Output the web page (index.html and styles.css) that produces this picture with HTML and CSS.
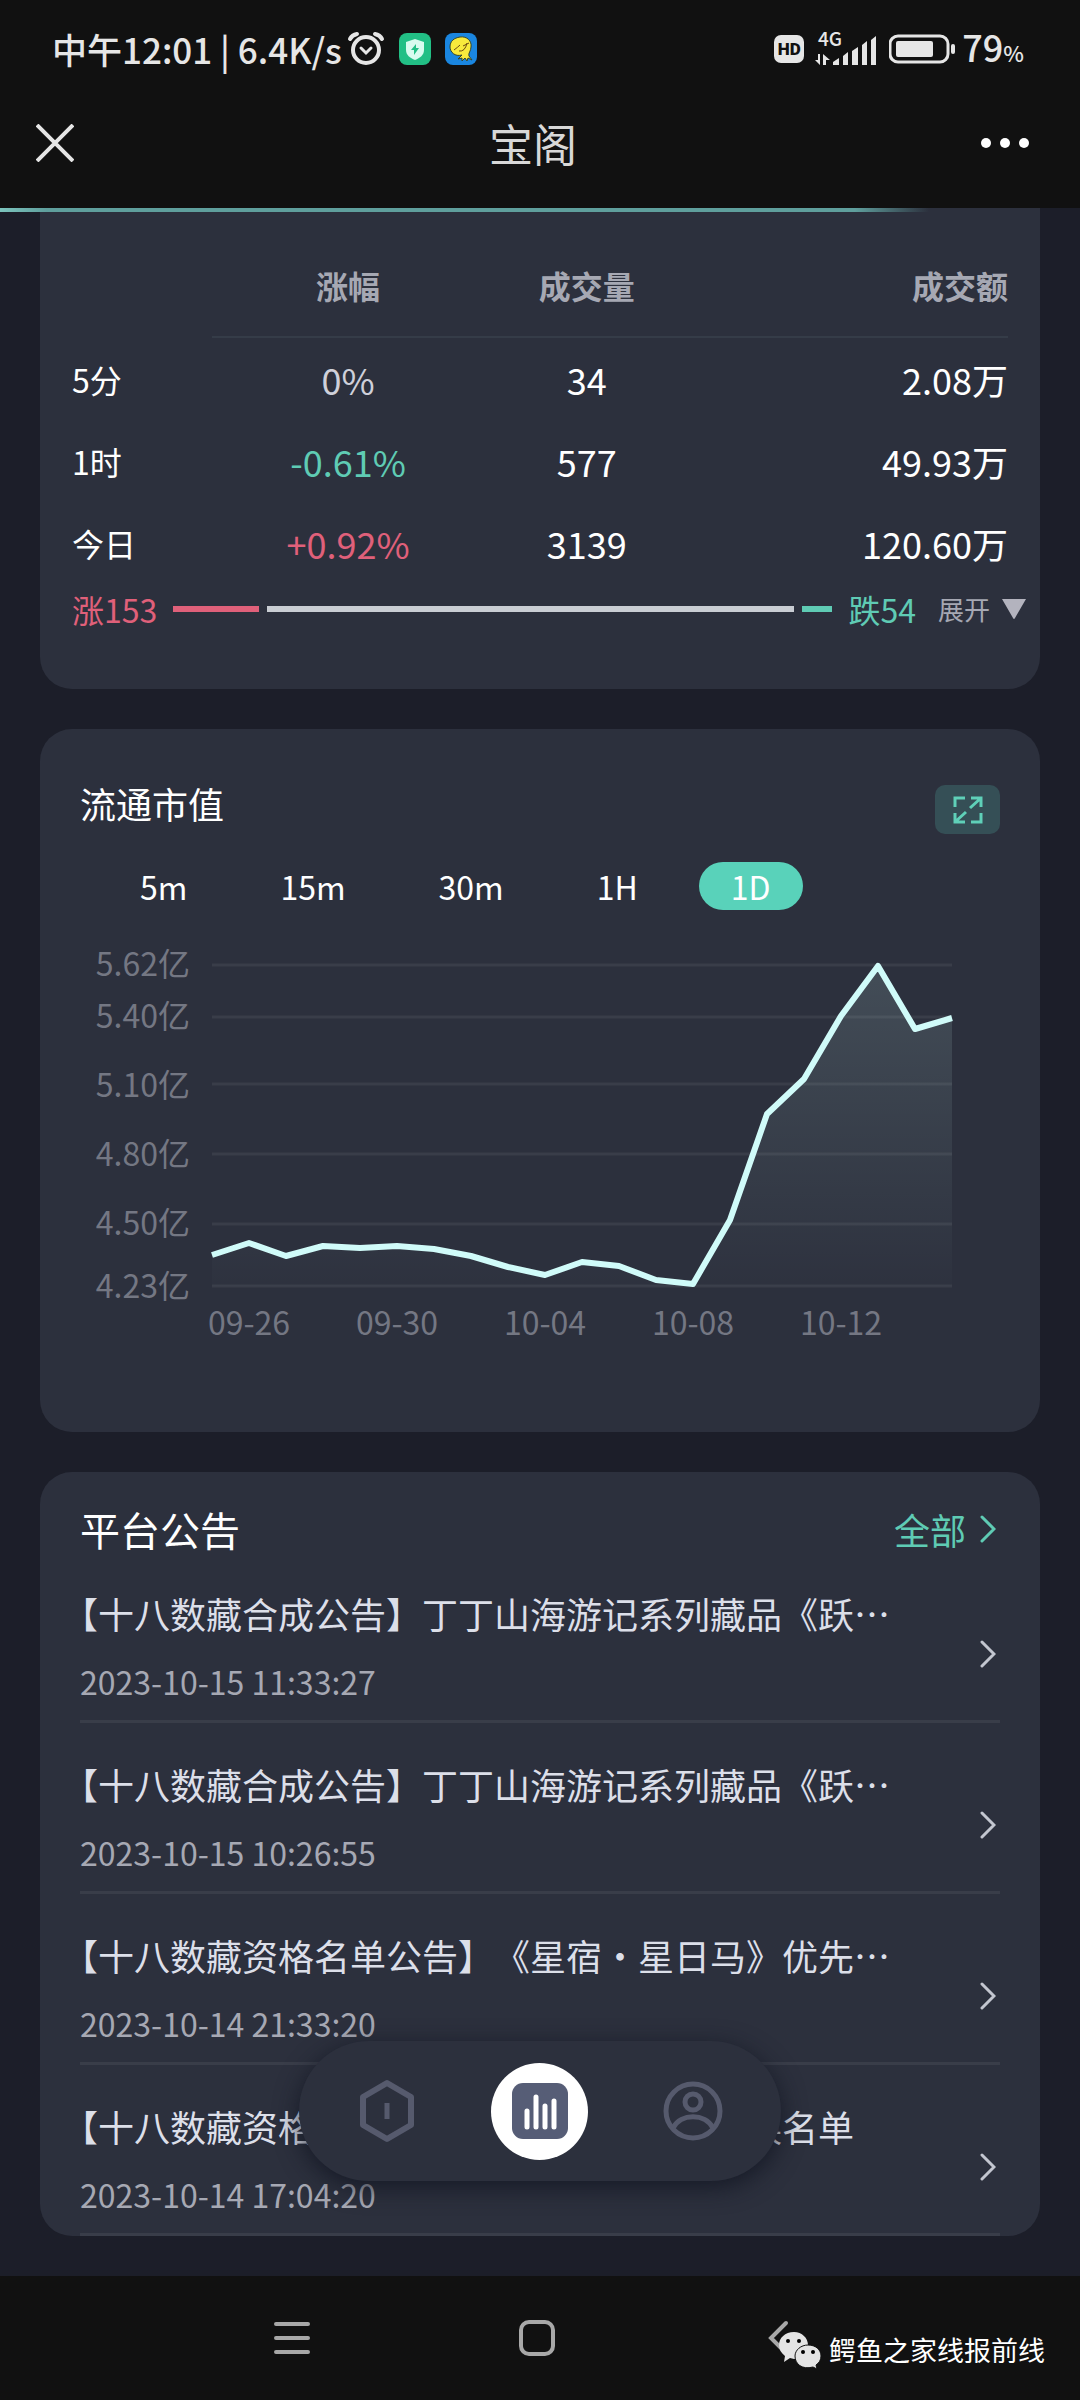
FILE: index.html
```html
<!DOCTYPE html>
<html lang="zh-CN">
<head>
  <meta charset="UTF-8" />
  <meta name="viewport" content="width=device-width, initial-scale=1.0" />
  <title>宝阁</title>
  <link rel="stylesheet" href="styles.css">
</head>
<body>
  <header class="topbar">
    <div class="status">
      <div class="status-side">
        <span class="clock">中午12:01 | 6.4K/s</span>
        <svg class="alarm" width="38" height="36" viewBox="0 0 38 36" fill="none" stroke="#e6e6e6" stroke-linecap="round">
          <circle cx="19" cy="19" r="13" stroke-width="4" />
          <path d="M3 8 Q5 4 10 3 M35 8 Q33 4 28 3" stroke-width="4" />
          <path d="M14 17 L19 22 L24 17" stroke-width="3" />
        </svg>
        <svg class="app-icon" width="32" height="32" viewBox="0 0 32 32">
          <rect width="32" height="32" rx="8" fill="#22bf85" />
          <path d="M16 6 L25 9 V17 C25 22 21 25 16 27 C11 25 7 22 7 17 V9 Z" fill="#d9fbef" />
          <path d="M17 11 L12 17 H15 V22 L20 15 H17 Z" fill="#22bf85" />
        </svg>
        <svg class="app-icon" width="32" height="32" viewBox="0 0 32 32">
          <rect width="32" height="32" rx="8" fill="#1a86e0" />
          <path d="M15 4 C22 3 27 8 26 14 C26 18 23 20 24 23 L27 27 L23 25 L22 28 L20 25 L17 28 L17 25 L13 26 L17 22 C10 24 5 19 5 14 C5 8 9 5 15 4 Z" fill="#f8ea3c" stroke="#35452c" stroke-width="1" />
          <path d="M9 17 Q13 14 15 12 M14 18 Q20 19 22 10 M18 13 L24 10" fill="none" stroke="#6b4a12" stroke-width="1" />
        </svg>
      </div>
      <div class="status-side">
        <span class="hd">HD</span>
        <svg class="signal" width="64" height="52" viewBox="0 -8 64 52" fill="#e6e6e6">
          <text x="3" y="15" class="signal-label">4G</text>
          <path d="M5 23 V34 L0 29 H3 V23 Z M8 34 V23 L15 29 H11 V34 Z" />
          <path d="M18 31 L24 27 V34 H18 Z M28 25 L33 21 V34 H28 Z M37 20 L43 16 V34 H37 Z M47 14 L52 10 V34 H47 Z M56 9 L61 5 V34 H56 Z" />
        </svg>
        <svg class="battery" width="67" height="30" viewBox="0 0 67 30">
          <rect x="1" y="2" width="58" height="26" rx="8" fill="none" stroke="#e6e6e6" stroke-width="3" />
          <rect x="7" y="7" width="37" height="16" rx="2" fill="#e6e6e6" />
          <rect x="62" y="10" width="4" height="10" rx="2" fill="#e6e6e6" />
        </svg>
        <span class="percent">79<small>%</small></span>
      </div>
    </div>
    <div class="titlebar">
      <button class="icon-btn" type="button" aria-label="关闭">
        <svg width="38" height="38" viewBox="0 0 38 38" stroke="#e6e6e6" stroke-width="4"><path d="M1 1 L37 37 M37 1 L1 37" /></svg>
      </button>
      <h1>宝阁</h1>
      <button class="icon-btn" type="button" aria-label="更多">
        <svg width="50" height="12" viewBox="0 0 50 12" fill="#fff"><circle cx="6" cy="6" r="5" /><circle cx="25" cy="6" r="5" /><circle cx="44" cy="6" r="5" /></svg>
      </button>
    </div>
    <div class="progress"></div>
  </header>

  <main>
    <section class="card card-quotes">
      <table class="quotes">
        <thead>
          <tr><td></td><th scope="col">涨幅</th><th scope="col">成交量</th><th scope="col">成交额</th></tr>
        </thead>
        <tbody>
          <tr><th scope="row">5分</th><td class="flat">0%</td><td>34</td><td>2.08万</td></tr>
          <tr><th scope="row">1时</th><td class="down">-0.61%</td><td>577</td><td>49.93万</td></tr>
          <tr><th scope="row">今日</th><td class="up">+0.92%</td><td>3139</td><td>120.60万</td></tr>
        </tbody>
      </table>
      <div class="breadth">
        <span class="up">涨153</span>
        <div class="breadth-bar">
          <i class="bar-up"></i>
          <i class="bar-flat"></i>
          <i class="bar-down"></i>
        </div>
        <span class="down">跌54</span>
        <button class="expand" type="button">展开
          <svg width="24" height="22" viewBox="0 0 24 22" fill="#b3b3be"><path d="M0 1 H24 L13 20 Q12 22 11 20 Z" /></svg>
        </button>
      </div>
    </section>

    <section class="card card-chart">
      <div class="chart-head">
        <h2>流通市值</h2>
        <button class="fullscreen" type="button" aria-label="全屏">
          <svg width="30" height="28" viewBox="0 0 30 28" fill="none" stroke="#5fd0b8" stroke-width="3">
            <path d="M2 11 V2 H12 M18 2 H28 V11 M28 2 L17 12 M28 17 V26 H18 M12 26 H2 V17 M2 26 L13 16" />
          </svg>
        </button>
      </div>
      <div class="tabs">
        <button type="button">5m</button>
        <button type="button">15m</button>
        <button type="button">30m</button>
        <button type="button">1H</button>
        <button type="button" class="active">1D</button>
      </div>
      <svg class="chart" viewBox="0 0 920 482">
        <defs>
          <linearGradient id="area" x1="0" y1="0" x2="0" y2="1">
            <stop offset="0%" stop-color="#d0fff8" stop-opacity="0.14" />
            <stop offset="100%" stop-color="#d0fff8" stop-opacity="0.01" />
          </linearGradient>
        </defs>
        <path class="grid" d="M132 55 H872 M132 107 H872 M132 174 H872 M132 244 H872 M132 314 H872 M132 376 H872" />
        <g class="axis axis-y">
          <text x="110" y="66">5.62亿</text>
          <text x="110" y="118">5.40亿</text>
          <text x="110" y="187">5.10亿</text>
          <text x="110" y="256">4.80亿</text>
          <text x="110" y="325">4.50亿</text>
          <text x="110" y="388">4.23亿</text>
        </g>
        <g class="axis axis-x">
          <text x="169" y="425">09-26</text>
          <text x="317" y="425">09-30</text>
          <text x="465" y="425">10-04</text>
          <text x="613" y="425">10-08</text>
          <text x="761" y="425">10-12</text>
        </g>
        <path fill="url(#area)" d="M132 345 L169 333 L206 346 L243 336 L280 338 L317 336 L354 339 L391 346 L428 357 L465 365 L502 352 L539 356 L576 370 L613 374 L650 310 L687 204 L724 169 L761 106 L798 56 L835 119 L872 108 V376 H132 Z" />
        <path class="line" d="M132 345 L169 333 L206 346 L243 336 L280 338 L317 336 L354 339 L391 346 L428 357 L465 365 L502 352 L539 356 L576 370 L613 374 L650 310 L687 204 L724 169 L761 106 L798 56 L835 119 L872 108" />
      </svg>
    </section>

    <section class="card card-news">
      <div class="news-head">
        <h2>平台公告</h2>
        <a href="#all">全部
          <svg class="chevron" width="16" height="28" viewBox="0 0 16 28"><path d="M2 2 L14 14 L2 26" /></svg>
        </a>
      </div>
      <a class="news" href="#n1">
        <div>
          <h3>【十八数藏合成公告】丁丁山海游记系列藏品《跃…</h3>
          <time>2023-10-15 11:33:27</time>
        </div>
        <svg class="chevron" width="16" height="28" viewBox="0 0 16 28"><path d="M2 2 L14 14 L2 26" /></svg>
      </a>
      <a class="news" href="#n2">
        <div>
          <h3>【十八数藏合成公告】丁丁山海游记系列藏品《跃…</h3>
          <time>2023-10-15 10:26:55</time>
        </div>
        <svg class="chevron" width="16" height="28" viewBox="0 0 16 28"><path d="M2 2 L14 14 L2 26" /></svg>
      </a>
      <a class="news" href="#n3">
        <div>
          <h3>【十八数藏资格名单公告】《星宿・星日马》优先…</h3>
          <time>2023-10-14 21:33:20</time>
        </div>
        <svg class="chevron" width="16" height="28" viewBox="0 0 16 28"><path d="M2 2 L14 14 L2 26" /></svg>
      </a>
      <a class="news" href="#n4">
        <div>
          <h3>【十八数藏资格名单公告】《山海游记》置换名单</h3>
          <time>2023-10-14 17:04:20</time>
        </div>
        <svg class="chevron" width="16" height="28" viewBox="0 0 16 28"><path d="M2 2 L14 14 L2 26" /></svg>
      </a>
    </section>
  </main>

  <nav class="dock">
    <a href="#home" aria-label="首页">
      <svg width="56" height="64" viewBox="0 0 56 64" fill="none" stroke="#565a6d" stroke-width="6" stroke-linejoin="round">
        <path d="M28 4 L52 18 V46 L28 60 L4 46 V18 Z" />
        <path d="M28 24 V40" stroke-width="5" />
      </svg>
    </a>
    <a class="current" href="#market" aria-label="行情">
      <svg width="56" height="56" viewBox="0 0 56 56">
        <rect width="56" height="56" rx="11" fill="#565d76" />
        <path d="M15 28 V44 M24 14 V44 M33 23 V44 M42 18 V44" stroke="#fff" stroke-width="5" stroke-linecap="round" />
      </svg>
    </a>
    <a href="#me" aria-label="我的">
      <svg width="60" height="60" viewBox="0 0 60 60" fill="none" stroke="#565a6d" stroke-width="5">
        <circle cx="30" cy="30" r="27" />
        <circle cx="30" cy="21" r="8" />
        <path d="M10 47 C18 32 42 32 50 47" />
      </svg>
    </a>
  </nav>

  <footer class="sysnav">
    <button class="icon-btn" type="button" aria-label="最近任务">
      <svg width="36" height="36" viewBox="0 0 36 36" stroke="#a8a8a8" stroke-width="4" stroke-linecap="round"><path d="M2 4 H34 M2 18 H34 M2 32 H34" /></svg>
    </button>
    <button class="icon-btn" type="button" aria-label="主页">
      <svg width="36" height="36" viewBox="0 0 36 36" fill="none" stroke="#a8a8a8" stroke-width="4"><rect x="2" y="2" width="32" height="32" rx="8" /></svg>
    </button>
    <button class="icon-btn" type="button" aria-label="返回">
      <svg width="36" height="36" viewBox="0 0 36 36" fill="none" stroke="#a8a8a8" stroke-width="4" stroke-linecap="round"><path d="M23 3 L8 18 L23 33" /></svg>
    </button>
    <div class="watermark">
      <svg width="42" height="38" viewBox="0 0 42 38">
        <path d="M15 1 C23 1 29 7 29 14 C29 22 23 28 15 28 L11 27 L5 31 L6 25 C2 22 0 18 0 14 C0 7 6 1 15 1 Z" fill="#e4e4e4" />
        <path d="M29 14 C37 14 42 19 42 25 C42 29 40 32 37 34 L38 38 L34 36 C23 39 16 33 16 25 C16 19 22 14 29 14 Z" fill="#e4e4e4" stroke="#111" stroke-width="1" />
        <circle cx="9" cy="10" r="2" /><circle cx="20" cy="10" r="2" /><circle cx="24" cy="21" r="2" /><circle cx="34" cy="21" r="2" />
      </svg>
      <span>鳄鱼之家线报前线</span>
    </div>
  </footer>
</body>
</html>
```
FILE: styles.css
```css
:root {
  --bg: #1c1e29;
  --card: #2c303d;
  --bar: #111111;
  --line: #393d49;
  --white: #ffffff;
  --muted: #a6a8b3;
  --axis: #747783;
  --green: #5fcbb4;
  --red: #e0607a;
}

* {
  box-sizing: border-box;
}

body {
  margin: 0;
  min-height: 100vh;
  display: flex;
  flex-direction: column;
  background: var(--bg);
  color: var(--white);
  font-family: "Noto Sans CJK SC", "Noto Sans", sans-serif;
  font-size: 32px;
  line-height: 48px;
}

h1, h2, h3 {
  margin: 0;
  font-weight: 400;
}

a {
  color: inherit;
  text-decoration: none;
}

button {
  border: 0;
  padding: 0;
  background: none;
  color: inherit;
  font: inherit;
}

svg {
  display: block;
  flex: none;
}

.icon-btn {
  display: flex;
}

.up { color: var(--red); }
.down { color: var(--green); }
.flat { color: #cfd0da; }

/* top bar */
.topbar {
  position: relative;
  background: var(--bar);
}

.status {
  height: 80px;
  padding: 18px 56px 0 52px;
  display: flex;
  justify-content: space-between;
  align-items: center;
  color: #e6e6e6;
}

.status-side {
  display: flex;
  align-items: center;
}

.clock {
  font-size: 35px;
  font-weight: 500;
}

.alarm { margin-left: 5px; }
.app-icon { margin-left: 14px; }

.hd {
  width: 30px;
  height: 28px;
  border-radius: 7px;
  background: #e6e6e6;
  color: var(--bar);
  font-family: Roboto, sans-serif;
  font-size: 17px;
  font-weight: 900;
  line-height: 28px;
  text-align: center;
}

.signal { margin-left: 11px; }

.signal-label {
  font-size: 19px;
  font-weight: 500;
}

.battery { margin-left: 10px; }

.percent {
  margin-left: 6px;
  font-size: 36px;
  font-weight: 500;
}

.percent small {
  font-size: 22px;
}

.titlebar {
  height: 128px;
  padding: 0 50px 2px 36px;
  display: grid;
  grid-template-columns: 1fr auto 1fr;
  align-items: center;
}

.titlebar h1 {
  color: #d8d8d8;
  font-size: 44px;
  line-height: 44px;
}

.titlebar .icon-btn:last-child {
  justify-self: end;
}

.progress {
  position: absolute;
  left: 0;
  bottom: -4px;
  width: 86%;
  height: 4px;
  background: linear-gradient(90deg, #7cc4bd, #5f9f9d 5%, #5f9f9d 92%, transparent);
}

/* cards */
main {
  flex: 1;
  padding: 0 40px 40px;
  display: flex;
  flex-direction: column;
  gap: 40px;
}

.card {
  border-radius: 32px;
  background: var(--card);
}

.card-quotes {
  padding: 32px 14px 55px 32px;
  border-radius: 0 0 32px 32px;
}

.quotes {
  width: calc(100% - 18px);
  table-layout: fixed;
  border-collapse: separate;
  border-spacing: 0;
  font-size: 36px;
  text-align: center;
}

.quotes td, .quotes th {
  height: 82px;
  padding: 0;
}

.quotes td:nth-child(1) { width: 15%; }
.quotes th:nth-child(2) { width: 29%; }
.quotes th:nth-child(3) { width: 22%; }

.quotes thead th {
  height: 98px;
  padding-bottom: 6px;
  border-bottom: 2px solid #353c48;
  color: var(--muted);
  font-size: 32px;
  font-weight: 700;
}

.quotes tbody th {
  font-size: 32px;
  font-weight: 400;
  text-align: left;
}

.quotes tr > :last-child {
  text-align: right;
}

.breadth {
  height: 50px;
  display: flex;
  align-items: center;
}

.breadth-bar {
  flex: 1;
  margin: 0 16px;
  display: flex;
  gap: 8px;
}

.breadth-bar i {
  height: 6px;
}

.bar-up { flex: 85; background: var(--red); }
.bar-flat { flex: 526; background: #c9cdd3; }
.bar-down { flex: 30; background: var(--green); }

.expand {
  margin-left: 22px;
  display: flex;
  align-items: center;
  gap: 12px;
  color: var(--muted);
  font-size: 26px;
}

.card-chart {
  padding: 56px 40px 40px;
}

.chart-head {
  display: flex;
  justify-content: space-between;
}

.chart-head h2 {
  font-size: 36px;
  line-height: 36px;
}

.fullscreen {
  width: 65px;
  height: 49px;
  display: flex;
  justify-content: center;
  align-items: center;
  border-radius: 10px;
  background: #354f56;
}

.tabs {
  margin-top: 28px;
  padding-left: 28px;
  display: flex;
  gap: 29px;
}

.tabs button {
  padding: 0 32px;
  border-radius: 24px;
}

.tabs .active {
  background: #59d2ba;
}

.chart {
  width: 100%;
}

.grid {
  stroke: var(--line);
  stroke-width: 3;
}

.axis {
  fill: var(--axis);
  font-size: 32px;
}

.axis-y { text-anchor: end; }
.axis-x { text-anchor: middle; }

.line {
  fill: none;
  stroke: #d0fbf9;
  stroke-width: 6;
  stroke-linejoin: round;
}

/* announcements */
.card-news {
  padding: 34px 40px 0;
}

.news-head {
  height: 46px;
  display: flex;
  justify-content: space-between;
  align-items: center;
}

.news-head h2 {
  font-size: 40px;
}

.news-head a {
  padding-right: 4px;
  display: flex;
  align-items: center;
  gap: 14px;
  color: var(--green);
  font-size: 36px;
}

.chevron {
  fill: none;
  stroke: currentColor;
  stroke-width: 3;
  stroke-linecap: round;
}

.news {
  padding: 37px 4px 19px 0;
  display: flex;
  justify-content: space-between;
  align-items: center;
  border-bottom: 3px solid var(--line);
  color: #dcdfe9;
}

.news h3 {
  font-size: 36px;
  text-indent: -18px;
  text-spacing-trim: space-all;
  white-space: nowrap;
}

.news time {
  display: block;
  margin-top: 24px;
  color: var(--muted);
  line-height: 40px;
}

.news .chevron {
  margin-top: 18px;
  color: #c3c6d0;
}

/* floating menu */
.dock {
  position: fixed;
  left: 50%;
  bottom: 219px;
  width: 482px;
  height: 140px;
  padding: 0 12px;
  display: grid;
  grid-template-columns: repeat(3, 1fr);
  place-items: center;
  transform: translateX(-50%);
  border-radius: 70px;
  background: var(--card);
  box-shadow: 0 6px 24px rgba(16, 20, 32, 0.8);
}

.dock .current {
  width: 97px;
  height: 97px;
  display: grid;
  place-items: center;
  border-radius: 50%;
  background: var(--white);
}

/* system navigation */
.sysnav {
  position: relative;
  height: 124px;
  padding: 0 26% 0 25.4%;
  display: flex;
  justify-content: space-between;
  align-items: center;
  background: var(--bar);
}

.watermark {
  position: absolute;
  right: 35px;
  bottom: 26px;
  display: flex;
  align-items: center;
  gap: 8px;
  font-size: 27px;
}
```
